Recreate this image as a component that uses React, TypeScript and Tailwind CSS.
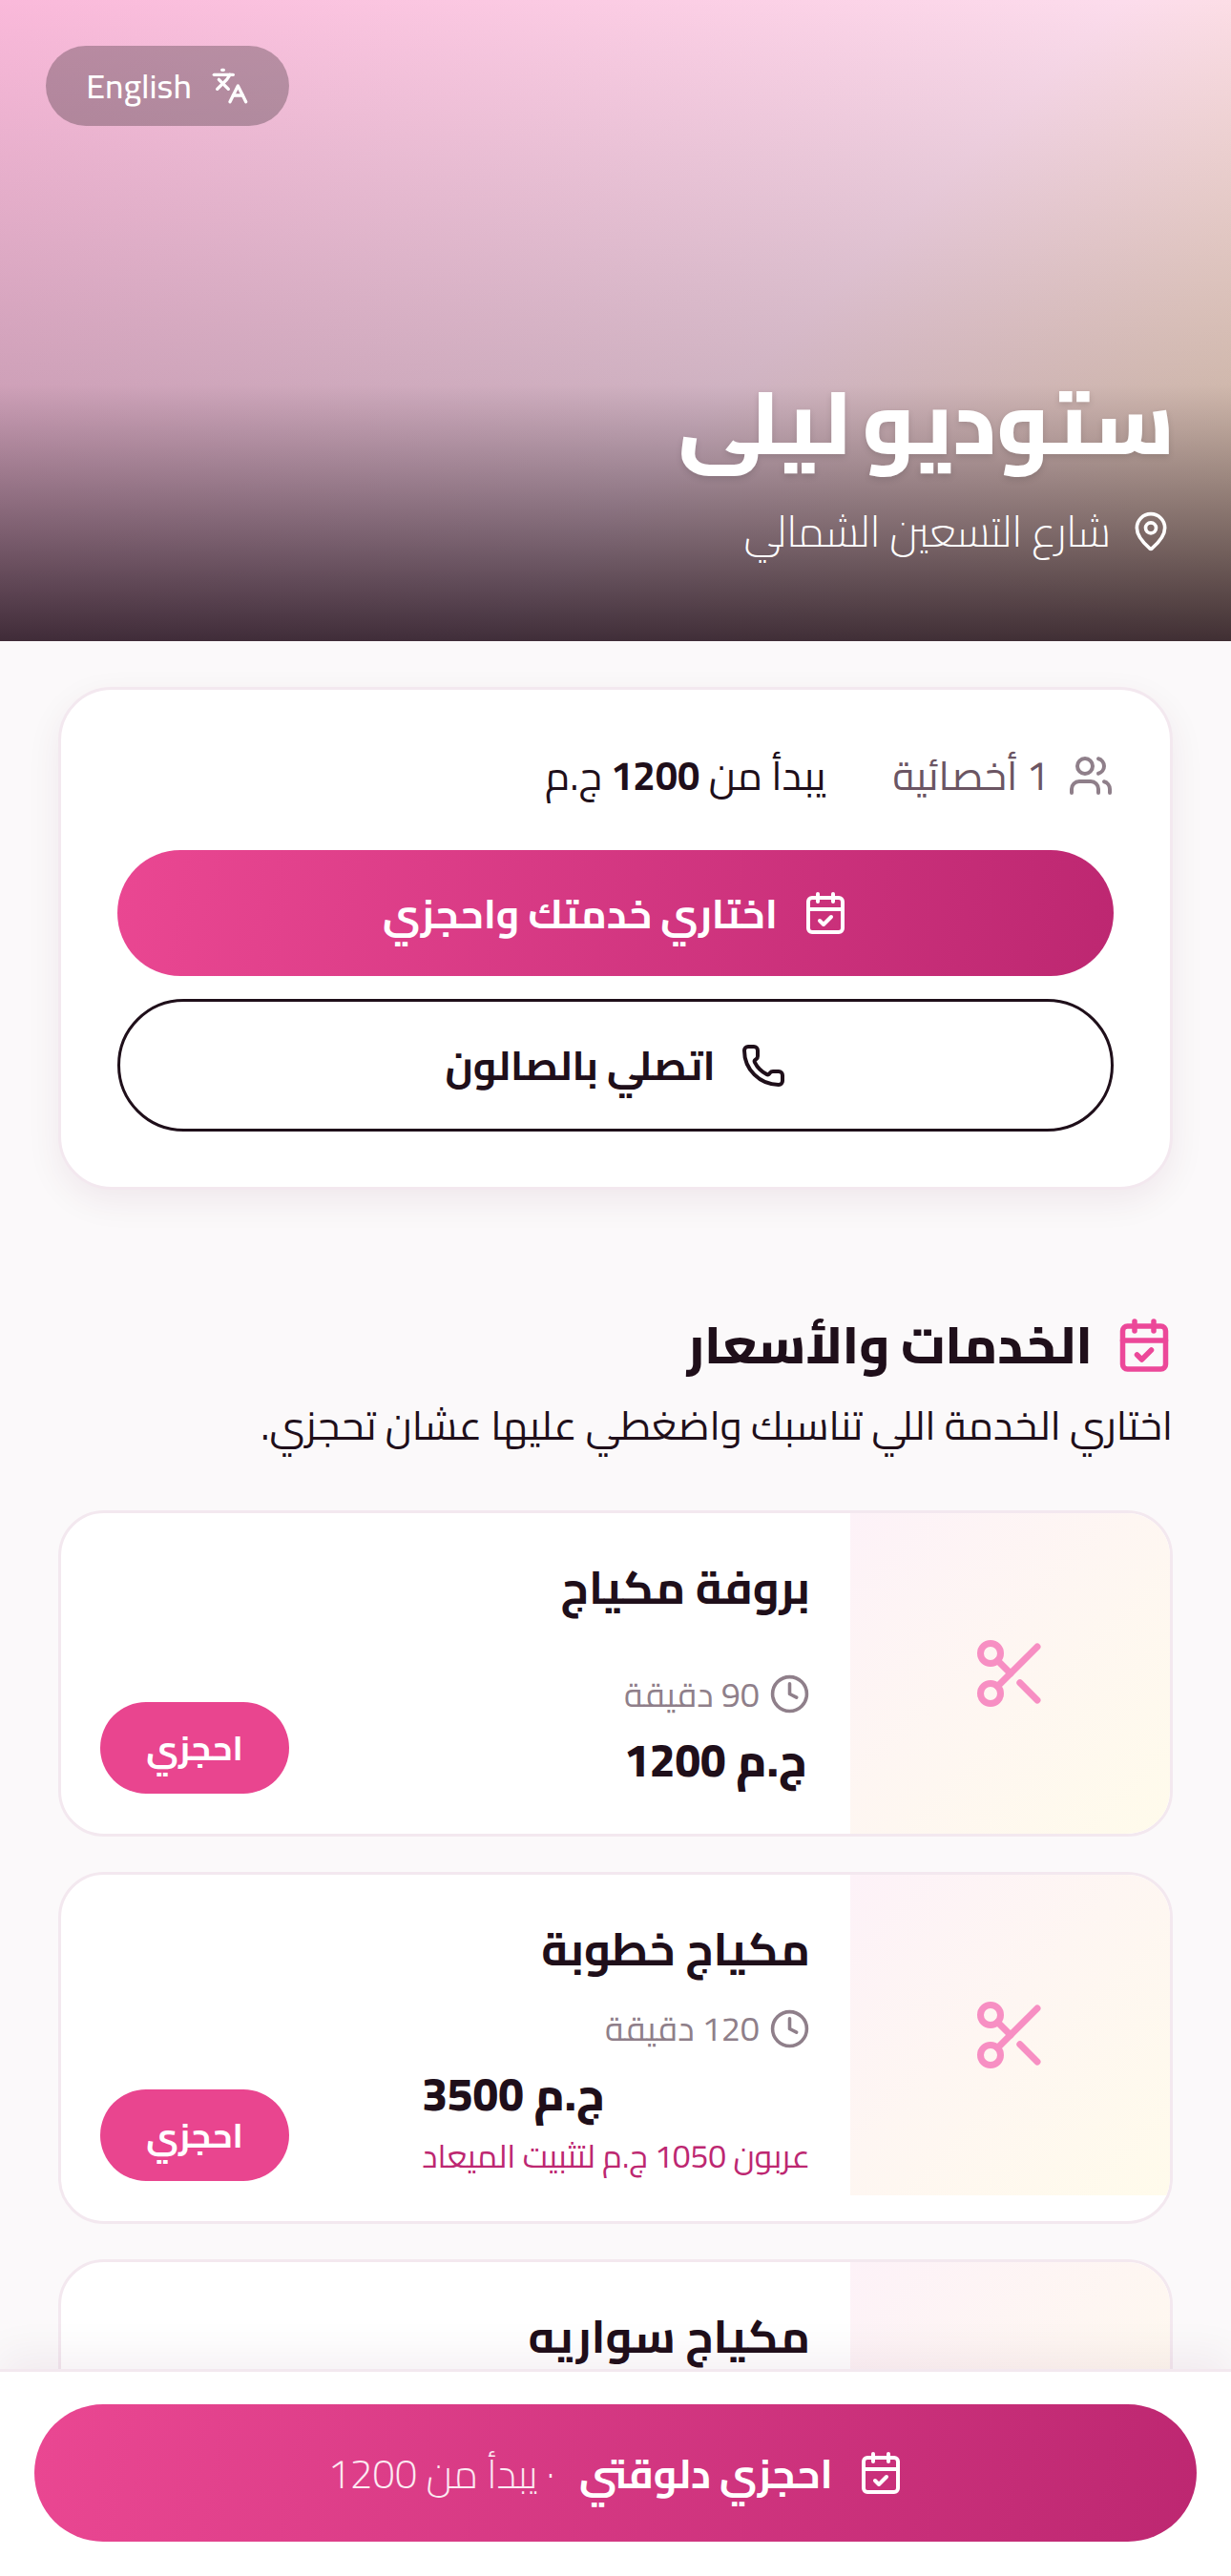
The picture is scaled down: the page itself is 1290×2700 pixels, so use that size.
import { CalendarCheck, Clock, Languages, MapPin, Phone, Scissors, Users } from "lucide-react";

const services = [
  { name: "بروفة مكياج", duration: "90 دقيقة", price: "ج.م 1200" },
  { name: "مكياج خطوبة", duration: "120 دقيقة", price: "ج.م 3500", deposit: "عربون 1050 ج.م لتثبيت الميعاد" },
  { name: "مكياج سواريه", duration: "150 دقيقة", price: "ج.م 2500" },
];

const ctaGradient = "bg-[linear-gradient(100deg,#ea4792,#bd2771)]";

export default function App() {
  return (
    <div dir="rtl" className="relative h-[2700px] overflow-hidden bg-[#fbf9fa] font-['Cairo',sans-serif] text-[#1f0f1a]">
      <header className="relative flex h-[672px] flex-col justify-end bg-[linear-gradient(135deg,#fab9da,#fcdcec_60%,#fde6c4)] px-[62px] pb-[85px]">
        <div className="absolute inset-0 bg-[linear-gradient(to_top,rgba(31,15,26,0.85),rgba(31,15,26,0.2)_40%,rgba(31,15,26,0)_100%)]" />
        <button className="absolute left-[48px] top-[48px] flex h-[84px] w-[255px] items-center justify-center gap-[20px] rounded-full bg-black/25 text-[36px] font-medium text-white">
          <Languages size={40} strokeWidth={2} />
          <span>English</span>
        </button>
        <div className="relative text-white">
          <h1 className="-mr-[3px] text-[92px] font-extrabold leading-[1.3] tracking-[-0.03em] [word-spacing:-8px] drop-shadow-md">ستوديو ليلى</h1>
          <div className="mt-[24px] flex items-center gap-[20px] text-[45px] font-light leading-[60px]">
            <MapPin size={44} strokeWidth={2} />
            <span>شارع التسعين الشمالي</span>
          </div>
        </div>
      </header>

      <main className="px-[61px]">
        <section className="mt-[48px] rounded-[56px] border-[3px] border-[#f3e8ef] bg-white px-[59px] pb-[58px] pt-[58px] shadow-[0_12px_36px_rgba(80,20,60,0.07)]">
          <div className="flex items-center gap-[70px] text-[42px]">
            <div className="flex items-center gap-[20px] text-[#6b5563]">
              <Users size={48} strokeWidth={2} className="text-[#8f7f8a]" />
              <span>1 أخصائية</span>
            </div>
            <div>
              يبدأ من <b>1200</b> ج.م
            </div>
          </div>
          <button className={`mt-[47px] flex h-[132px] w-full items-center justify-center gap-[26px] rounded-full ${ctaGradient} text-[42px] font-bold text-white`}>
            <CalendarCheck size={48} strokeWidth={2} />
            <span>اختاري خدمتك واحجزي</span>
          </button>
          <button className="mt-[24px] flex h-[139px] w-full items-center justify-center gap-[26px] rounded-full border-[3px] border-[#1f0f1a] bg-white text-[42px] font-bold">
            <Phone size={48} strokeWidth={2} />
            <span>اتصلي بالصالون</span>
          </button>
        </section>

        <section className="mt-[128px]">
          <div className="flex items-center gap-[24px]">
            <CalendarCheck size={60} strokeWidth={2.2} className="text-[#ec4899]" />
            <h2 className="text-[54px] font-extrabold leading-[1.3]">الخدمات والأسعار</h2>
          </div>
          <p className="mt-[20px] text-[42px] leading-[1.4]">اختاري الخدمة اللي تناسبك واضغطي عليها عشان تحجزي.</p>

          <div className="mt-[59px] flex flex-col gap-[37px]">
            {services.map((s) => (
              <article key={s.name} className="flex items-start overflow-hidden rounded-[48px] border-[3px] border-[#f3e8ef] bg-white">
                <div className="flex h-[336px] w-[335px] shrink-0 items-center justify-center bg-[linear-gradient(135deg,#fdf2f8,#fffbeb)]">
                  <Scissors size={84} strokeWidth={2} className="text-[#f78fc3]" />
                </div>
                <div className="flex min-h-[336px] flex-1 flex-col py-[44px] pl-[41px] pr-[42px]">
                  <h3 className="text-[48px] font-bold leading-[1.4]">{s.name}</h3>
                  <div className="mt-auto flex items-end justify-between gap-[40px] pt-[26px]">
                    <div className="flex flex-col items-end">
                      <div className="flex items-center gap-[10px] self-start text-[36px] leading-[48px] text-[#8f7f8a]">
                        <Clock size={43} strokeWidth={2} />
                        <span>{s.duration}</span>
                      </div>
                      <div className="mt-[11px] text-[48px] font-extrabold leading-[1.4]">{s.price}</div>
                      {s.deposit && <div className="mt-[8px] text-[33.5px] leading-[48px] text-[#bd2771]">{s.deposit}</div>}
                    </div>
                    <button className="-mb-[2px] flex h-[96px] w-[198px] shrink-0 items-center justify-center rounded-full bg-[#e9458f] text-[36px] font-bold text-white">
                      احجزي
                    </button>
                  </div>
                </div>
              </article>
            ))}
          </div>
        </section>
      </main>

      <div className="absolute inset-x-0 bottom-0 h-[217px] border-t-[3px] border-[#f3e8ef] bg-white px-[36px] pt-[34px] shadow-[0_-16px_40px_rgba(80,20,60,0.06)]">
        <button className={`flex h-[144px] w-full items-center justify-center gap-[26px] rounded-full ${ctaGradient} text-white`}>
          <CalendarCheck size={48} strokeWidth={2} />
          <span className="text-[42px] font-bold">احجزي دلوقتي</span>
          <span className="text-[42px] font-light text-white/90">· يبدأ من 1200</span>
        </button>
      </div>
    </div>
  );
}
